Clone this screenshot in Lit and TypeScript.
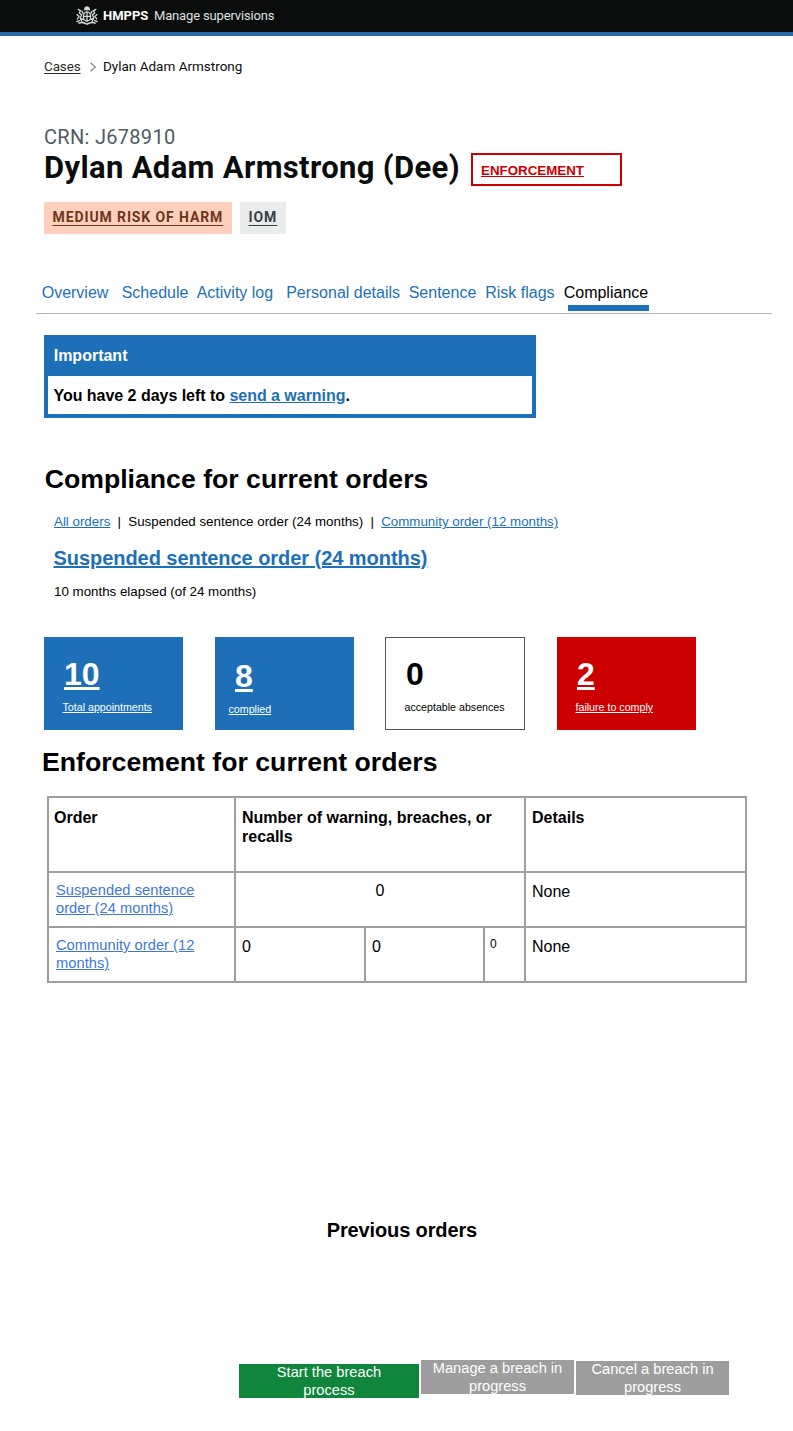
import { LitElement, html, css, svg } from "lit";
import { customElement } from "lit/decorators.js";

const crest = svg`
  <g fill="none" stroke="#d9dada" stroke-width="1.3" stroke-linecap="round">
    <path d="M8.6 3.6 L9.4 1.4 L11 .9 L12.6 1.4 L13.4 3.6 Z" fill="#d9dada"/>
    <ellipse cx="11" cy="10.4" rx="3.6" ry="4.6"/>
    <path d="M11 6 V15 M7.6 10.4 H14.4"/>
    <path d="M2.2 3.4 L4.4 4.6 L3.4 7 L5.6 9 L4.2 12 L5.8 15.4 M1 8.6 L3 10.4 L1.4 13 M.8 15.6 L3.4 14.6 M5.8 5.2 L7.2 7.4 M5.6 12.6 L7.4 13.6"/>
    <path d="M19.8 3.4 L17.6 4.6 L18.6 7 L16.4 9 L17.8 12 L16.2 15.4 M21 8.6 L19 10.4 L20.6 13 M21.2 15.6 L18.6 14.6 M16.2 5.2 L14.8 7.4 M16.4 12.6 L14.6 13.6"/>
    <path d="M3 17 Q7 15.6 11 18.2 Q15 15.6 19 17" stroke-width="1.6"/>
  </g>`;

@customElement("app-root")
export class AppRoot extends LitElement {
  static styles = css`
    :host {
      display: block;
      box-sizing: border-box;
      height: 1431px;
      overflow: hidden;
      background: #fff;
      color: #000;
      font-family: "Liberation Sans", Arial, sans-serif;
      font-size: 16px;
      line-height: 18px;
    }
    * { box-sizing: border-box; }
    h1, h2, h3, p { margin: 0; }
    a { text-decoration: underline; color: #1d70b8; }
    .gds { font-family: Roboto, sans-serif; color: #0b0c0c; white-space: nowrap; }

    .top {
      display: flex;
      height: 36px;
      padding: 0 0 0 76px;
      background: #0b0c0c;
      border-bottom: 4px solid #2b69ad;
      font-size: 13px;
      line-height: 32px;
    }
    .top svg { width: 22px; height: 20px; margin: 6px 5px 0 0; }
    .top b { width: 51px; color: #fff; font-weight: 700; }
    .top span { color: #dfe0e0; letter-spacing: -0.16px; }

    .crumbs { display: flex; margin: 21px 0 0 44px; font-size: 13.5px; }
    .crumbs a { width: 45px; color: #2b2c2c; letter-spacing: -0.15px; text-underline-offset: 2px; }
    .crumbs svg { width: 8px; height: 10px; margin: 5px 6px 0 0; }

    .crn { margin: 49px 0 0 44px; font-size: 20px; line-height: 27px; letter-spacing: 0.3px; color: #505a5f; }
    .title { display: flex; height: 33px; margin: 2px 0 0 44px; }
    .title h1 { width: 427px; font-size: 31px; line-height: 29px; font-weight: 700; letter-spacing: 0.34px; }
    .enforce {
      width: 151px;
      height: 33px;
      padding: 7px 0 0 8px;
      border: 2px solid #cc0000;
      font-size: 13.33px;
      font-weight: 700;
    }
    .enforce a { color: #cc0000; }

    .tags { display: flex; gap: 8px; margin: 16px 0 0 44px; height: 32px; }
    .tag { padding-left: 8.5px; font-size: 14px; font-weight: 700; line-height: 31px; letter-spacing: 0.89px; background: #eaecec; }
    .tag a { color: #383f43; text-underline-offset: 3px; text-decoration-thickness: 1px; }
    .risk { width: 188px; background: #fcd0bd; }
    .risk a { color: #6e3619; }
    .iom { width: 46px; }

    nav {
      display: grid;
      grid-template-columns: 80px 75px 89.5px 122.5px 76.5px 78.5px 90px;
      width: 736px;
      height: 30px;
      margin: 50px 0 0 36px;
      padding-left: 5.7px;
      border-bottom: 1px solid #b1b4b6;
      color: #1d70b8;
      white-space: nowrap;
    }
    .active { color: #000; }
    .bar { width: 81px; height: 6px; margin: 3px 0 0 4.3px; background: #1d70b8; }

    .notice { width: 492px; height: 83px; margin: 21px 0 0 44px; border: 4px solid #1d70b8; border-top: 0; font-weight: 700; }
    .notice h2 { height: 41px; padding: 12px 0 0 5.7px; background: #1d70b8; color: #fff; font-size: 16px; line-height: 18px; }
    .notice p { padding: 11px 0 0 5.5px; letter-spacing: -0.03px; }

    .head { font-size: 26.67px; line-height: 30px; font-weight: 700; white-space: nowrap; }
    .compliance { margin: 46px 0 0 44.7px; }
    .filter { display: flex; margin: 20px 0 0 54px; font-size: 13.33px; line-height: 15px; white-space: nowrap; }
    .sep { width: 18px; text-align: center; }
    .order { margin: 18px 0 0 53.5px; font-size: 20px; line-height: 22px; letter-spacing: -0.05px; }
    .elapsed { margin: 15px 0 0 54px; font-size: 13.33px; line-height: 15px; }

    .cards { display: grid; grid-template-columns: repeat(4, 139px); column-gap: 32px; height: 93px; margin: 38px 0 0 44px; }
    .card { padding: 19px 0 0 20px; background: #1d70b8; color: #fff; }
    .card a { color: inherit; }
    .num { font-size: 32px; line-height: 36px; font-weight: 700; }
    .lbl { margin: 9px 0 0 -1.5px; font-size: 10.67px; line-height: 12px; white-space: nowrap; }
    .low { padding-top: 21px; }
    .low .lbl { margin-left: -6.5px; }
    .plain { margin-left: -1px; padding: 18px 0 0 20px; background: #fff; color: #000; border: 1px solid #555; }
    .red { background: #cc0000; }

    .enf-head { margin: 17px 0 0 42px; }
    .table {
      display: grid;
      grid-template-columns: 185px 128px 117px 39px 219px;
      grid-template-rows: 73px 53px 53px;
      gap: 2px;
      width: 700px;
      margin: 19px 0 0 47px;
      padding: 2px;
      background: #9e9e9e;
    }
    .cell { padding: 10px 0 0 6px; background: #fff; }
    .th { padding: 10px 0 0 5px; font-weight: 700; line-height: 19px; }
    .wide { grid-column: span 3; padding-left: 6px; }
    .details { padding-left: 6px; }
    .mid { padding: 9px 0 0; text-align: center; }
    .link { padding: 8px 0 0 7px; font-size: 14.67px; letter-spacing: 0.04px; }
    .link a { color: #3c78d8; }
    .small { padding: 7px 0 0 5px; font-size: 12px; }

    .previous { margin: 236px 0 0 326.7px; font-size: 20px; line-height: 22px; letter-spacing: -0.13px; }
    .actions { display: flex; align-items: flex-start; margin: 119px 0 0 239px; }
    .btn {
      width: 153px;
      height: 34px;
      margin-right: 2px;
      padding: 0 8px;
      background: #9e9e9e;
      color: #fff;
      font-size: 14.67px;
      text-align: center;
    }
    .btn span { display: block; margin-top: -1px; }
    .go { width: 180px; margin-top: 4px; padding: 0 35px; background: #10853c; }
    .cancel { margin-top: 1px; }
  `;

  private card(value: string, label: string, kind = "", linked = true) {
    return html`<div class="card ${kind}">
      <div class="num">${linked ? html`<a>${value}</a>` : value}</div>
      <div class="lbl">${linked ? html`<a>${label}</a>` : label}</div>
    </div>`;
  }

  render() {
    return html`
      <header class="top gds">
        <svg viewBox="0 0 22 20">${crest}</svg>
        <b>HMPPS</b><span>Manage supervisions</span>
      </header>
      <div class="crumbs gds">
        <a>Cases</a>
        <svg viewBox="0 0 8 10"><path d="M1.5 .8 L6.3 5 L1.5 9.2" fill="none" stroke="#7d8386" stroke-width="1.2"/></svg>
        <span>Dylan Adam Armstrong</span>
      </div>
      <p class="crn gds">CRN: J678910</p>
      <div class="title">
        <h1 class="gds">Dylan Adam Armstrong (Dee)</h1>
        <div class="enforce"><a>ENFORCEMENT</a></div>
      </div>
      <div class="tags">
        <div class="tag risk gds"><a>MEDIUM RISK OF HARM</a></div>
        <div class="tag iom gds"><a>IOM</a></div>
      </div>
      <nav>
        <span>Overview</span><span>Schedule</span><span>Activity log</span><span>Personal details</span>
        <span>Sentence</span><span>Risk flags</span>
        <div class="active">Compliance<div class="bar"></div></div>
      </nav>
      <section class="notice">
        <h2>Important</h2>
        <p>You have 2 days left to <a>send a warning</a>.</p>
      </section>
      <h2 class="head compliance">Compliance for current orders</h2>
      <div class="filter">
        <a>All orders</a><span class="sep">|</span><span>Suspended sentence order (24 months)</span
        ><span class="sep">|</span><a>Community order (12 months)</a>
      </div>
      <h3 class="order"><a>Suspended sentence order (24 months)</a></h3>
      <p class="elapsed">10 months elapsed (of 24 months)</p>
      <div class="cards">
        ${this.card("10", "Total appointments")}
        ${this.card("8", "complied", "low")}
        ${this.card("0", "acceptable absences", "plain", false)}
        ${this.card("2", "failure to comply", "red")}
      </div>
      <h2 class="head enf-head">Enforcement for current orders</h2>
      <div class="table">
        <div class="cell th">Order</div>
        <div class="cell th wide">Number of warning, breaches, or<br />recalls</div>
        <div class="cell th details">Details</div>
        <div class="cell link"><a>Suspended sentence<br />order (24 months)</a></div>
        <div class="cell wide mid">0</div>
        <div class="cell">None</div>
        <div class="cell link"><a>Community order (12<br />months)</a></div>
        <div class="cell">0</div>
        <div class="cell">0</div>
        <div class="cell small">0</div>
        <div class="cell">None</div>
      </div>
      <h3 class="previous">Previous orders</h3>
      <div class="actions">
        <div class="btn go"><span>Start the breach process</span></div>
        <div class="btn"><span>Manage a breach in progress</span></div>
        <div class="btn cancel"><span>Cancel a breach in progress</span></div>
      </div>
    `;
  }
}
